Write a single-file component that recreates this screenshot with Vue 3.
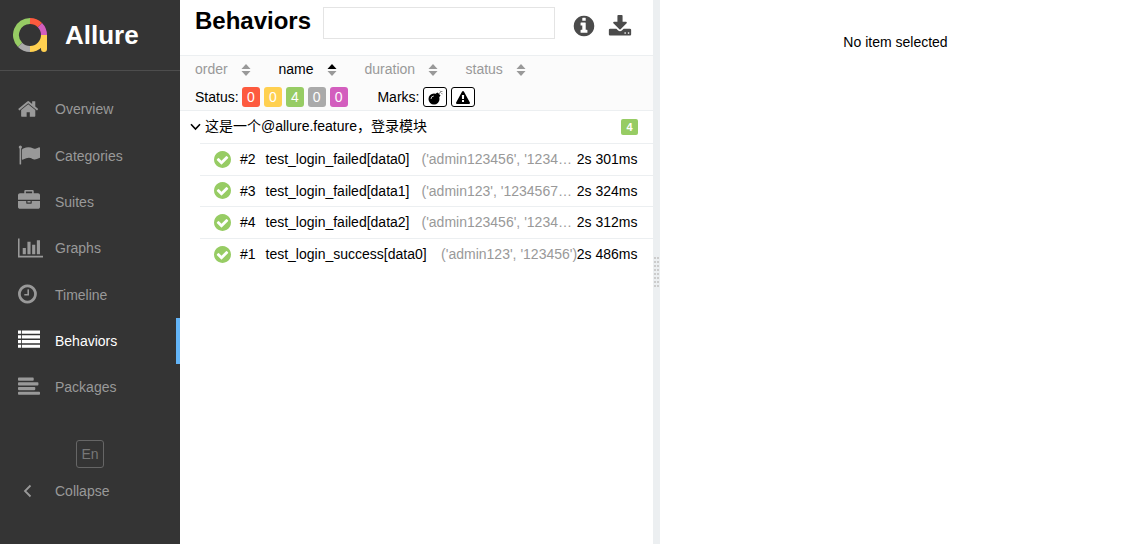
<template>
  <div class="app">
    <nav class="side-nav">
      <div class="brand">
        <svg class="brand-logo" viewBox="0 0 34 35" aria-hidden="true">
          <g fill="none" stroke-width="6">
            <path stroke="#97cc64" d="M17 3a14 14 0 0 0-9.900 23.900" />
            <path stroke="#fd5a3e" d="M17 3a14 14 0 0 1 9.900 4.100" />
            <path stroke="#d35ebe" d="M26.900 7.100A14 14 0 0 1 31 17" />
            <path stroke="#aaa" d="M7.100 26.900A14 14 0 0 0 17 31" />
            <path stroke="#ffd050" d="M17 31a14 14 0 0 0 14-14" />
            <path stroke="#ffd050" stroke-linecap="round" d="M31 20v11" />
          </g>
          <path fill="#ffd050" d="M28 17h6v4h-6z" />
        </svg>
        <span class="brand-text">Allure</span>
      </div>

      <ul class="menu">
        <li v-for="item in menu" :key="item.title" :class="['menu-item', { 'menu-item-active': item.active }]">
          <span class="menu-icon">
            <svg :viewBox="`${item.left || 0} 0 ${item.width || 1792} 1792`" :class="{ wide: item.width }"><path :d="item.icon" /></svg>
          </span>
          <span>{{ item.title }}</span>
        </li>
      </ul>

      <div class="nav-footer">
        <button class="lang-button">En</button>
        <div class="collapse">
          <span class="collapse-icon">
            <svg viewBox="0 0 9 14"><path d="M7.500 1.500 2 7l5.500 5.500" /></svg>
          </span>
          <span>Collapse</span>
        </div>
      </div>
    </nav>

    <section class="tree-pane">
      <header class="pane-head">
        <h1>Behaviors</h1>
        <input class="search" type="text" />
        <svg class="head-icon head-info" viewBox="0 0 1792 1792"><path :d="icons.info" /></svg>
        <svg class="head-icon head-download" viewBox="0 0 1792 1792"><path :d="icons.download" /></svg>
      </header>

      <div class="controls">
        <div class="sorter">
          <span v-for="col in sorters" :key="col.name" :class="['sort-item', `sort-${col.name}`, { 'sort-active': col.active }]">
            {{ col.name }}
            <svg class="sort-icon" viewBox="0 0 9 12">
              <path class="sort-up" d="M4.500 0 9 5H0z" />
              <path d="M0 7h9l-4.500 5z" />
            </svg>
          </span>
        </div>
        <div class="filters">
          <span class="filter-label">Status:</span>
          <span v-for="s in statuses" :key="s.name" :class="['status', `status-${s.name}`]">{{ s.count }}</span>
          <span class="filter-label marks-label">Marks:</span>
          <span class="mark">
            <svg class="bomb" viewBox="0 0 15 15">
              <circle cx="6" cy="9" r="5.500" />
              <path d="m7.500 3.800 2-1.300 3 3-1.500 2z" />
              <path class="fuse" d="M10.800 3.800 12.300 2.300M12 .800l.5.700M13.600 3.500l.7.300M13.500 1.800l.8-.8" />
              <path class="shine" d="M3 9a3 3 0 0 1 2.800-3" />
            </svg>
          </span>
          <span class="mark">
            <svg class="warning" viewBox="0 0 1792 1664"><path :d="icons.warning" /></svg>
          </span>
        </div>
      </div>

      <div class="group-row">
        <svg class="group-arrow" viewBox="0 0 11 8"><path d="m1 1.300 4.500 4.700L10 1.300" /></svg>
        <span class="group-name">这是一个@allure.feature，登录模块</span>
        <span class="group-count">4</span>
      </div>

      <div class="leaves">
        <div v-for="test in tests" :key="test.order" class="leaf">
          <svg class="check" viewBox="128 128 1536 1536"><path :d="icons.check" /></svg>
          <span class="leaf-order">#{{ test.order }}</span>
          <span class="leaf-name">{{ test.name }}</span>
          <span class="leaf-params">{{ test.params }}</span>
          <span class="leaf-time">{{ test.time }}</span>
        </div>
      </div>
    </section>

    <div class="gutter">
      <div class="grip"><i v-for="n in 16" :key="n"></i></div>
    </div>

    <main class="detail-pane">No item selected</main>
  </div>
</template>

<script setup>
const disc = 'M1664 896q0 209-103 385.500t-279.500 279.500-385.500 103-385.500-103-279.500-279.500-103-385.500 103-385.500 279.500-279.500 385.500-103 385.500 103 279.500 279.500 103 385.500z'

const icons = {
  info: 'M1152 1376v-160q0-14-9-23t-23-9h-96v-512q0-14-9-23t-23-9h-320q-14 0-23 9t-9 23v160q0 14 9 23t23 9h96v320h-96q-14 0-23 9t-9 23v160q0 14 9 23t23 9h448q14 0 23-9t9-23zm-128-896v-160q0-14-9-23t-23-9h-192q-14 0-23 9t-9 23v160q0 14 9 23t23 9h192q14 0 23-9t9-23z' + disc,
  download: 'M1344 1344q0-26-19-45t-45-19-45 19-19 45 19 45 45 19 45-19 19-45zm256 0q0-26-19-45t-45-19-45 19-19 45 19 45 45 19 45-19 19-45zm128-224v320q0 40-28 68t-68 28h-1472q-40 0-68-28t-28-68v-320q0-40 28-68t68-28h465l135 136q58 56 136 56t136-56l136-136h464q40 0 68 28t28 68zm-325-569q17 41-14 70l-448 448q-18 19-45 19t-45-19l-448-448q-31-29-14-70 17-39 59-39h256v-448q0-26 19-45t45-19h256q26 0 45 19t19 45v448h256q42 0 59 39z',
  warning: 'M1024 1375v-190q0-14-9.500-23.500t-22.500-9.500h-192q-13 0-22.500 9.500t-9.500 23.500v190q0 14 9.500 23.500t22.500 9.500h192q13 0 22.500-9.500t9.500-23.500zm-2-374l18-459q0-12-10-19-13-11-24-11h-220q-11 0-24 11-10 7-10 21l17 457q0 10 10 16.500t24 6.500h185q14 0 23.500-6.500t10.500-16.500zm-14-934l768 1408q35 63-2 126-17 29-46.500 46t-63.500 17h-1536q-34 0-63.500-17t-46.500-46q-37-63-2-126l768-1408q17-31 47-49t65-18 65 18 47 49z',
  check: 'M1412 734q0-28-18-46l-91-90q-19-19-45-19t-45 19l-408 407-226-226q-19-19-45-19t-45 19l-91 90q-18 18-18 46 0 27 18 45l362 362q19 19 45 19 27 0 46-19l543-543q18-18 18-45z' + disc,
}

const menu = [
  { title: 'Overview', left: 64, icon: 'M1472 992v480q0 26-19 45t-45 19h-384v-384h-256v384h-384q-26 0-45-19t-19-45v-480q0-1 .5-3t.5-3l575-474 575 474q1 2 1 6zm223-69l-62 74q-8 9-21 11h-3q-13 0-21-7l-692-577-692 577q-12 8-24 7-13-2-21-11l-62-74q-8-10-7-23.500t11-21.500l719-599q32-26 76-26t76 26l244 204v-195q0-14 9-23t23-9h192q14 0 23 9t9 23v408l219 182q10 8 11 21.500t-7 23.500z' },
  { title: 'Categories', icon: 'M320 256q0 72-64 110v1266q0 13-9.500 22.500t-22.500 9.500h-64q-13 0-22.500-9.500t-9.500-22.500v-1266q-64-38-64-110 0-53 37.500-90.500t90.500-37.500 90.500 37.500 37.500 90.500zm1472 64v763q0 25-12.500 38.500t-39.500 27.500q-215 116-369 116-61 0-123.500-22t-108.500-48-115.500-48-142.500-22q-192 0-464 146-17 9-33 9-26 0-45-19t-19-45v-742q0-32 31-55 21-14 79-43 236-120 421-120 107 0 200 29t219 88q38 19 88 19 54 0 117.500-21t110-47 88-47 54.500-21q26 0 45 19t19 45z' },
  { title: 'Suites', icon: 'M640 256h512v-128h-512v128zm1152 640v480q0 66-47 113t-113 47h-1472q-66 0-113-47t-47-113v-480h672v160q0 26 19 45t45 19h320q26 0 45-19t19-45v-160h672zm-768 0v128h-256v-128h256zm768-480v384h-1792v-384q0-66 47-113t113-47h352v-160q0-40 28-68t68-28h576q40 0 68 28t28 68v160h352q66 0 113 47t47 113z' },
  { title: 'Graphs', width: 2048, icon: 'M640 896v512h-256v-512h256zm384-512v1024h-256v-1024h256zm1024 1152v128h-2048v-1536h128v1408h1920zm-640-896v768h-256v-768h256zm384-384v1152h-256v-1152h256z' },
  { title: 'Timeline', left: 128, icon: 'M1024 544v448q0 14-9 23t-23 9h-320q-14 0-23-9t-9-23v-64q0-14 9-23t23-9h224v-352q0-14 9-23t23-9h64q14 0 23 9t9 23zm416 352q0-148-73-273t-198-198-273-73-273 73-198 198-73 273 73 273 198 198 273 73 273-73 198-198 73-273z' + disc },
  { title: 'Behaviors', active: true, icon: 'M0 128h256v256H0zM320 128h1472v256H320zM0 512h256v256H0zM320 512h1472v256H320zM0 896h256v256H0zM320 896h1472v256H320zM0 1280h256v256H0zM320 1280h1472v256H320z' },
  { title: 'Packages', icon: 'M64 128h1152q64 0 64 64v128q0 64-64 64H64q-64 0-64-64V192q0-64 64-64zM64 512h1536q64 0 64 64v128q0 64-64 64H64q-64 0-64-64V576q0-64 64-64zM64 896h1280q64 0 64 64v128q0 64-64 64H64q-64 0-64-64V960q0-64 64-64zM64 1280h1664q64 0 64 64v128q0 64-64 64H64q-64 0-64-64v-128q0-64 64-64z' },
]

const sorters = [
  { name: 'order' },
  { name: 'name', active: true },
  { name: 'duration' },
  { name: 'status' },
]

const statuses = [
  { name: 'failed', count: 0 },
  { name: 'broken', count: 0 },
  { name: 'passed', count: 4 },
  { name: 'skipped', count: 0 },
  { name: 'unknown', count: 0 },
]

const tests = [
  { order: 2, name: 'test_login_failed[data0]', params: "('admin123456', '1234…", time: '2s 301ms' },
  { order: 3, name: 'test_login_failed[data1]', params: "('admin123', '1234567…", time: '2s 324ms' },
  { order: 4, name: 'test_login_failed[data2]', params: "('admin123456', '1234…", time: '2s 312ms' },
  { order: 1, name: 'test_login_success[data0]', params: "('admin123', '123456')", time: '2s 486ms' },
]
</script>

<style>
body {
  margin: 0;
  background: #fff;
}
</style>

<style scoped>
.app {
  display: flex;
  height: 544px;
  overflow: hidden;
  color: #000;
  font: 14px/20px "Liberation Sans", Arial, "Noto Sans CJK SC", sans-serif;
}

.app * {
  box-sizing: border-box;
}

svg {
  display: block;
  flex: none;
  fill: currentColor;
  fill-rule: evenodd;
}

.side-nav {
  flex: none;
  width: 180px;
  background: #343434;
  color: #999;
}

.brand {
  display: flex;
  align-items: center;
  height: 71px;
  padding-left: 13px;
  border-bottom: 1px solid #4d4d4d;
}

.brand-logo {
  width: 34px;
  height: 35px;
}

.brand-text {
  margin-left: 18px;
  color: #fff;
  font-size: 26px;
  font-weight: bold;
}

.menu {
  margin: 0;
  padding: 15.1px 0 0;
  list-style: none;
}

.menu-item {
  display: flex;
  align-items: center;
  height: 46.33px;
  padding-left: 18px;
}

.menu-item-active {
  border-right: 4px solid #63b4f7;
  color: #fff;
}

.menu-icon {
  width: 37px;
  padding-bottom: 1.4px;
}

.menu-icon svg {
  width: 22px;
  height: 22px;
}

.menu-icon svg.wide {
  width: 25.14px;
}

.nav-footer {
  padding-top: 30px;
}

.lang-button {
  display: block;
  width: 28px;
  height: 28px;
  margin: 0 auto;
  padding: 0 0 1px;
  border: 1px solid #666;
  border-radius: 3px;
  background: none;
  color: #777;
  font: inherit;
}

.collapse {
  display: flex;
  align-items: center;
  height: 46px;
  padding-left: 23px;
}

.collapse-icon {
  width: 32px;
}

.collapse-icon svg {
  width: 9px;
  height: 14px;
  fill: none;
  stroke: currentColor;
  stroke-width: 1.8;
}

.tree-pane {
  flex: none;
  width: 473px;
}

.pane-head {
  display: flex;
  align-items: flex-start;
  height: 56px;
  padding: 7px 0 0 15px;
  border-bottom: 1px solid #eceff1;
}

h1 {
  width: 128px;
  margin: 0;
  font-size: 24px;
  line-height: 28px;
}

.search {
  width: 232px;
  height: 32px;
  padding: 0 8px;
  border: 1px solid #e4e4e4;
  outline: none;
  font: inherit;
}

.head-icon {
  width: 24px;
  height: 24px;
  margin-top: 7px;
  color: #4b4b4b;
}

.head-info {
  margin-left: 17px;
}

.head-download {
  margin-top: 7.5px;
  margin-left: 11.5px;
}

.controls {
  height: 55px;
  padding-left: 15px;
  border-bottom: 1px solid #eceff1;
  background: #fbfbfb;
}

.sorter {
  display: flex;
  height: 29px;
  padding-top: 3px;
  color: #999;
}

.sort-item {
  display: flex;
  justify-content: space-between;
  align-items: center;
  height: 20px;
}

.sort-order {
  width: 55.5px;
  margin-right: 28px;
}

.sort-name {
  width: 58px;
  margin-right: 28px;
}

.sort-duration {
  width: 73.5px;
  margin-right: 27.5px;
}

.sort-status {
  width: 60.5px;
}

.sort-active {
  color: #000;
}

.sort-icon {
  width: 10px;
  height: 12px;
  margin-top: 1px;
  fill: #999;
}

.sort-active .sort-up {
  fill: #000;
}

.filters {
  display: flex;
  align-items: center;
  height: 24px;
}

.filter-label {
  width: 47px;
}

.marks-label {
  width: 46px;
  margin-left: 26px;
}

.status {
  width: 18px;
  height: 20px;
  margin-right: 3.9px;
  border-radius: 3px;
  color: #fff;
  text-align: center;
}

.status-failed {
  background: #fd5a3e;
}

.status-broken {
  background: #ffd050;
}

.status-passed {
  background: #97cc64;
}

.status-skipped {
  background: #aaa;
}

.status-unknown {
  background: #d35ebe;
}

.mark {
  display: flex;
  align-items: center;
  justify-content: center;
  width: 24px;
  height: 20px;
  margin-right: 4px;
  border: 1px solid #000;
  border-radius: 3px;
  background: #fff;
}

.bomb {
  width: 15px;
  height: 15px;
}

.fuse,
.shine {
  fill: none;
  stroke: #000;
  stroke-width: 0.8;
}

.shine {
  stroke: #fff;
}

.warning {
  width: 14px;
  height: 13px;
}

.group-row {
  display: flex;
  align-items: center;
  height: 32px;
  padding: 0 15px 0 9.5px;
}

.group-arrow {
  width: 11px;
  height: 8px;
  margin: 0 4.5px 1px 0;
  fill: none;
  stroke: #000;
  stroke-width: 1.6;
}

.group-name {
  flex: 1;
  padding-bottom: 2px;
}

.group-count {
  width: 17px;
  height: 16px;
  border-radius: 2px;
  background: #97cc64;
  color: #fff;
  font-size: 11px;
  font-weight: bold;
  line-height: 16px;
  text-align: center;
}

.leaves {
  margin-left: 20px;
}

.leaf {
  display: flex;
  align-items: center;
  height: 31.67px;
  padding: 0 15.5px 0.5px 14px;
  border-top: 1px solid #eceff1;
  white-space: nowrap;
}

.check {
  width: 17px;
  height: 17px;
  color: #97cc64;
}

.leaf-order {
  width: 25.5px;
  margin-left: 9px;
}

.leaf-name {
  flex: none;
}

.leaf-params {
  flex: 1;
  min-width: 0;
  margin-left: 12px;
  color: #999;
}

.leaf:last-child .leaf-params {
  margin-left: 14.5px;
}

.leaf-time {
  flex: none;
}

.gutter {
  display: flex;
  align-items: center;
  justify-content: center;
  flex: none;
  width: 7px;
  background: #eceff1;
}

.grip {
  display: grid;
  grid-template-columns: 2px 2px;
  gap: 2px 1px;
}

.grip i {
  width: 2px;
  height: 2px;
  background: #ccc;
}

.detail-pane {
  flex: 1;
  padding-top: 32px;
  padding-right: 1px;
  text-align: center;
}
</style>
